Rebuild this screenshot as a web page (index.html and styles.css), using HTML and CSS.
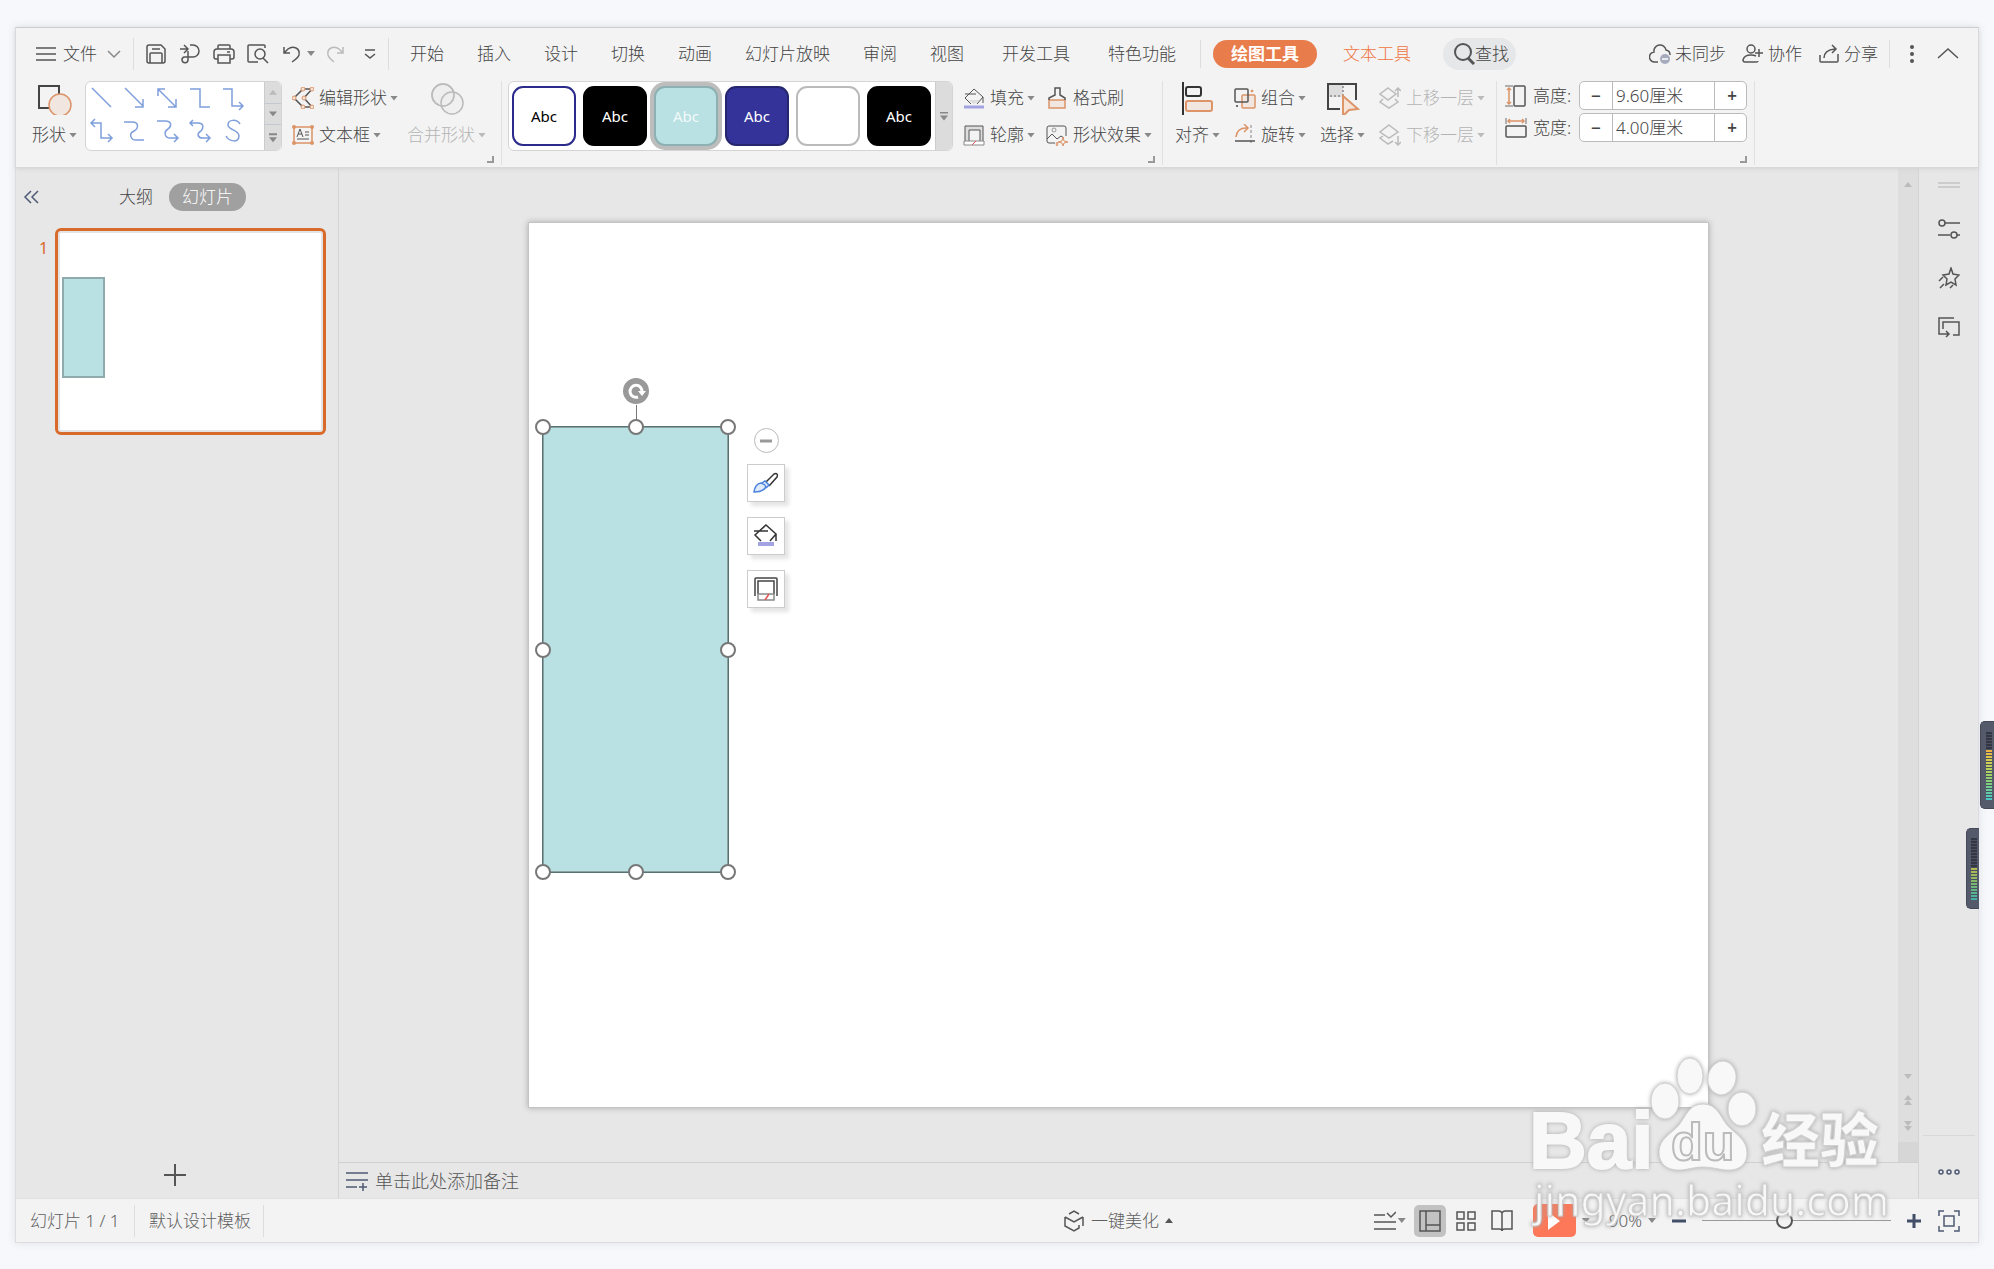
FILE: index.html
```html
<!DOCTYPE html>
<html lang="zh-CN">
<head>
<meta charset="utf-8">
<title>演示文稿</title>
<link rel="stylesheet" href="styles.css">
</head>
<body>
<div class="app">
  <header class="ribbon">
    <div class="menu">
      <button class="file"><svg class="ic" width="20" height="22" viewBox="0 0 20 22"><path d="M0 5h20M0 11h20M0 17h20"/></svg>文件<svg class="ic soft chev" width="14" height="22" viewBox="0 0 14 22"><path d="M1 8l6 6 6-6"/></svg></button>
      <span class="vline"></span>
      <div class="quick">
        <button aria-label="保存"><svg class="ic" viewBox="0 0 22 22"><path d="M4 2h12l4 4v12a2 2 0 0 1-2 2H4a2 2 0 0 1-2-2V4a2 2 0 0 1 2-2zM5 20v-9a1 1 0 0 1 1-1h10a1 1 0 0 1 1 1v9M7 6h8"/></svg></button>
        <button aria-label="输出为PDF"><svg class="ic" viewBox="0 0 22 22"><path d="M1 6h7M5 2l4 4-4 4M11 2h3a6 6 0 0 1 0 12H5a3 3 0 1 0 4 3V8"/></svg></button>
        <button aria-label="打印"><svg class="ic" viewBox="0 0 22 22"><path d="M5 6V3q0-1 1-1h10q1 0 1 1v3M5 16H3q-2 0-2-2V9q0-3 3-3h14q3 0 3 3v5q0 2-2 2h-2M5 12h12v8H5zM14 9h3"/></svg></button>
        <button aria-label="打印预览"><svg class="ic" viewBox="0 0 22 22"><path d="M18 5V3q0-1-1-1H2q-1 0-1 1v15q0 1 1 1h9M16 15l5 5"/><circle cx="13" cy="11" r="5"/></svg></button>
        <button aria-label="撤销"><svg class="ic" viewBox="0 0 22 22"><path d="M3 4v6h6M3 10l4-4q4-3 8-1t3 7q-1 3-7 7"/></svg></button>
        <i class="caret"></i>
        <button aria-label="恢复"><svg class="ic off" viewBox="0 0 22 22"><path d="M18 4v6h-6M18 10l-4-4q-4-3-8-1t-3 7q1 3 6 7"/></svg></button>
        <button aria-label="自定义"><svg class="ic" viewBox="0 0 22 22"><path d="M7 7h10M7 11l5 4 5-4"/></svg></button>
      </div>
      <span class="vline"></span>
      <nav class="tabs">
        <button>开始</button><button>插入</button><button>设计</button><button>切换</button><button>动画</button><button>幻灯片放映</button><button>审阅</button><button>视图</button>
      </nav>
      <nav class="tabs more"><button>开发工具</button><button>特色功能</button></nav>
      <span class="vline short"></span>
      <button class="pill">绘图工具</button>
      <button class="texttab">文本工具</button>
      <button class="find"><svg class="ic" viewBox="0 0 22 22" stroke-width="2"><circle cx="10" cy="9" r="8"/><path d="M15 15l6 6" stroke-width="3"/></svg>查找</button>
      <div class="account">
        <button><svg class="ic" viewBox="0 0 22 22"><path d="M9 19H6a5 5 0 0 1-1-10 6 6 0 0 1 12-2 5 5 0 0 1 4 5"/><circle cx="16" cy="16" r="5" fill="#a5abbd" stroke="none"/><path d="M13 16h6" stroke="#fff"/></svg>未同步</button>
        <button><svg class="ic" viewBox="0 0 22 22"><circle cx="9" cy="6" r="4"/><path d="M14 13q-2-1-5-1-7 0-8 5 0 2 2 2h11q2 0 2-1M17 6v8M13 10h8"/></svg>协作</button>
        <button><svg class="ic" viewBox="0 0 22 22"><path d="M2 12v6q0 1 1 1h16q1 0 1-1v-7M6 15q0-8 11-9M14 2l4 4-4 4"/></svg>分享</button>
      </div>
      <span class="vline short"></span>
      <button class="dots" aria-label="更多"><svg width="4" height="22" viewBox="0 0 4 22" fill="#555"><circle cx="2" cy="4" r="2"/><circle cx="2" cy="11" r="2"/><circle cx="2" cy="18" r="2"/></svg></button>
      <button class="fold" aria-label="收起功能区"><svg class="ic" viewBox="0 0 22 22"><path d="M1 15l10-9 10 9"/></svg></button>
    </div>

    <div class="tools">
      <section class="group g-shape">
        <div class="row">
          <button class="big"><svg class="ic" width="34" height="34" viewBox="0 0 34 34"><path d="M1 5h20v22H1z" stroke="#444" stroke-width="2"/><circle cx="22" cy="24" r="11" fill="#f1e7e0" stroke="#dc9468"/></svg><span>形状<i class="caret"></i></span></button>
          <div class="gallery">
            <svg class="lines" viewBox="0 0 178 68"><g><path d="M6 6l19 19M39 6l18 18M57 17v8h-8M72 7l18 18M72 14V7h7M90 17v8h-8M104 7h10v18h10M137 7h9v17h10M153 20l4 4-4 4"/><path d="M6 41h9v15h10M9 37l-4 4 4 4M22 52l4 4-4 4M38 40h8c8 0 6 7 2 9-6 3-3 9 2 9h8M71 39h8c8 0 6 6 3 8-5 3-3 9 2 9h7M88 52l4 4-4 4M104 41h8c7 0 5 6 3 8-5 3-3 7 2 7h6M107 38l-3 3 3 3M120 52l4 4-4 4M154 42c-3-5-12-5-12 1 0 5 11 5 11 11 0 7-10 6-13 0"/></g></svg>
            <div class="steps"><button aria-label="上一行"><i class="caret up pale"></i></button><button aria-label="下一行"><i class="caret"></i></button><button aria-label="更多形状"><i class="caret bar"></i></button></div>
          </div>
          <div class="pair">
            <button><svg class="ic" viewBox="0 0 22 22"><path d="M11 2h9l-8 9 8 9h-9L2 11z"/><g fill="#f3e3d8" stroke="#dc9468" stroke-width="1"><circle cx="11" cy="2" r="2"/><circle cx="20" cy="2" r="2"/><circle cx="2" cy="11" r="2"/><circle cx="12" cy="11" r="2"/><circle cx="11" cy="20" r="2"/><circle cx="20" cy="20" r="2"/></g></svg>编辑形状<i class="caret"></i></button>
            <button><svg class="ic" viewBox="0 0 22 22"><path d="M2 3h18v16H2z" stroke="#dc9468"/><path d="M5 13l3-8 3 8M6 10h4M13 8h4M13 11h4M5 15h12" stroke-width="1"/><g fill="#dc9468" stroke="none"><circle cx="2" cy="3" r="2"/><circle cx="20" cy="3" r="2"/><circle cx="2" cy="19" r="2"/><circle cx="20" cy="19" r="2"/></g></svg>文本框<i class="caret"></i></button>
          </div>
          <button class="big off" disabled><svg class="ic off" width="34" height="34" viewBox="0 0 34 34"><circle cx="13" cy="14" r="11" fill="#eee"/><circle cx="22" cy="22" r="11" fill="#eee" fill-opacity=".5"/><circle cx="13" cy="14" r="11"/></svg><span>合并形状<i class="caret pale"></i></span></button>
        </div>
        <button class="launch" aria-label="更多选项"></button>
      </section>

      <section class="group g-style">
        <div class="row">
          <div class="gallery">
            <div class="swatches">
              <button class="sw line">Abc</button><button class="sw black">Abc</button><button class="sw teal">Abc</button><button class="sw blue">Abc</button><button class="sw plain">Abc</button><button class="sw black">Abc</button>
            </div>
            <div class="steps one"><button aria-label="更多样式"><i class="caret bar"></i></button></div>
          </div>
          <div class="pair">
            <button><svg class="ic" viewBox="0 0 22 22"><path d="M5 13h12l-6 4z" fill="#ddd" stroke="none"/><path d="M8 17l-6-6 9-9 9 8-6 7M2 7h11M20 10v6" stroke-width="1"/><path d="M1 20h20" stroke="#a3a3e4" stroke-width="3"/></svg>填充<i class="caret"></i></button>
            <button><svg class="ic" viewBox="0 0 22 22" stroke-width="1"><path d="M2 17V2h18v15" fill="#ddd"/><path d="M6 17V6h11v11" fill="#f3f3f3"/><path d="M1 17h20v4H1z" fill="#fff" stroke="#888"/><path d="M9 21l4-4" stroke="#e05555"/></svg>轮廓<i class="caret"></i></button>
          </div>
          <div class="pair">
            <button><svg class="ic" viewBox="0 0 22 22"><path d="M3 13h16v8H3z" fill="#f1e7e0" stroke="#dc9468"/><path d="M3 13v-2l6-3V1h5v7l5 3v2"/></svg>格式刷</button>
            <button><svg class="ic" viewBox="0 0 22 22" stroke-width="1"><path d="M9 19H3q-2 0-2-2V4q0-2 2-2h15q2 0 2 2v8M1 15l5-5 5 5 4-3 3 2"/><circle cx="8" cy="6" r="2" stroke="#999"/><path d="M17 13l1 4 4 1-4 1-1 3-1-3-4-1 4-1zM11 18l1 2-1 2-1-2z" stroke="#dc9468"/></svg>形状效果<i class="caret"></i></button>
          </div>
        </div>
        <button class="launch" aria-label="更多选项"></button>
      </section>

      <section class="group g-arrange">
        <div class="row">
          <button class="big"><svg class="ic" width="34" height="34" viewBox="0 0 34 34" stroke-width="2"><path d="M2 1v33" stroke="#333"/><rect x="5" y="6" width="15" height="9" rx="2" stroke="#333"/><rect x="5" y="20" width="26" height="10" rx="2" fill="#f1e7e0" stroke="#dc9468"/></svg><span>对齐<i class="caret"></i></span></button>
          <div class="pair">
            <button><svg class="ic" viewBox="0 0 22 22"><rect x="8" y="8" width="13" height="13" rx="1" fill="#f1e7e0" stroke="#dc9468"/><rect x="1" y="2" width="13" height="13" rx="1"/><circle cx="18" cy="4" r="1" fill="#dc9468" stroke="#dc9468" stroke-width="1"/><circle cx="3" cy="19" r="1" fill="#444" stroke="none"/></svg>组合<i class="caret"></i></button>
            <button><svg class="ic" viewBox="0 0 22 22"><path d="M17 1v20" stroke-dasharray="3 2" stroke="#aaa"/><path d="M1 17h20"/><path d="M2 13q1-10 12-9M10 0l4 4-4 4" stroke="#dc9468"/></svg>旋转<i class="caret"></i></button>
          </div>
          <button class="big"><svg class="ic" width="34" height="34" viewBox="0 0 34 34"><path d="M2 3h15v13H2z" fill="#ddd" stroke="none"/><path d="M14 28H2V3h28v16" stroke="#444" stroke-width="2"/><path d="M17 5v10M4 15h12" stroke-dasharray="2 2" stroke="#888"/><path d="M17 15l15 13-9 1-6 6z" fill="#f6e4d8" stroke="#dc9468" stroke-width="2"/></svg><span>选择<i class="caret"></i></span></button>
          <div class="pair off">
            <button disabled><svg class="ic off" viewBox="0 0 22 22"><path d="M9 1l8 6-8 6-8-6zM4 12l-3 3 9 6 9-6-3-3M19 10V1M16 4l3-3 3 3"/></svg>上移一层<i class="caret pale"></i></button>
            <button disabled><svg class="ic off" viewBox="0 0 22 22"><path d="M10 1l9 7-9 6-9-6zM4 12l-3 2 8 6 5-3M19 12v9M16 18l3 3 3-3"/></svg>下移一层<i class="caret pale"></i></button>
          </div>
        </div>
      </section>

      <section class="group g-size">
        <div class="sizes">
          <div class="size"><svg class="ic" viewBox="0 0 22 22"><path d="M0 1h8M0 21h8" stroke="#999"/><path d="M4 3v16M2 5l2-2 2 2M2 17l2 2 2-2" stroke="#dc9468"/><rect x="9" y="1" width="11" height="20" rx="1"/></svg><label for="h">高度:</label><div class="spin"><button aria-label="减小高度">−</button><input id="h" value="9.60厘米"><button aria-label="增大高度">+</button></div></div>
          <div class="size"><svg class="ic" viewBox="0 0 22 22"><path d="M1 1v6M21 1v6" stroke="#999"/><path d="M3 4h16M5 2L3 4l2 2M17 2l2 2-2 2" stroke="#dc9468"/><rect x="1" y="9" width="20" height="11" rx="1"/></svg><label for="w">宽度:</label><div class="spin"><button aria-label="减小宽度">−</button><input id="w" value="4.00厘米"><button aria-label="增大宽度">+</button></div></div>
        </div>
        <button class="launch" aria-label="更多选项"></button>
      </section>
    </div>
  </header>

  <main class="work">
    <aside class="outline">
      <div class="outhead">
        <button class="collapse" aria-label="收起"><svg class="ic navy" width="16" height="22" viewBox="0 0 16 22"><path d="M8 5l-6 6 6 6M15 5l-6 6 6 6"/></svg></button>
        <button class="tab">大纲</button>
        <button class="tab on">幻灯片</button>
      </div>
      <div class="thumbrow"><span class="num">1</span><button class="thumb" aria-label="幻灯片 1"><span class="mini"></span></button></div>
      <button class="add" aria-label="新建幻灯片"><svg width="22" height="22" viewBox="0 0 22 22" stroke="#555" stroke-width="2"><path d="M0 11h22M11 0v22"/></svg></button>
    </aside>

    <section class="center">
      <div class="stagerow">
        <div class="stage">
          <div class="slide">
            <div class="shape">
              <i class="stem"></i>
              <svg class="rotate" viewBox="0 0 26 26"><circle cx="13" cy="13" r="13" fill="#999"/><path d="M15 19a6 6 0 1 1 4-5" fill="none" stroke="#fff" stroke-width="3"/><path d="M15 13h8l-4 5z" fill="#fff"/></svg>
              <i class="h" style="left:0;top:0"></i><i class="h" style="left:50%;top:0"></i><i class="h" style="left:100%;top:0"></i>
              <i class="h" style="left:0;top:50%"></i><i class="h" style="left:100%;top:50%"></i>
              <i class="h" style="left:0;top:100%"></i><i class="h" style="left:50%;top:100%"></i><i class="h" style="left:100%;top:100%"></i>
              <div class="float">
                <button class="round" aria-label="收起工具"><svg width="12" height="4" viewBox="0 0 12 4"><path d="M0 2h12" stroke="#999" stroke-width="3"/></svg></button>
                <button class="sq" aria-label="样式"><svg width="26" height="26" viewBox="0 0 26 26" fill="none" stroke="#333" stroke-width="1.5"><path d="M13 12l8-8q2-1 3 0t0 3l-8 9"/><path d="M1 22q1-8 7-9 4 1 5 4-3 5-12 5zM9 13l3-2 4 4-3 3" stroke="#4a83dc" fill="#dfeafc"/></svg></button>
                <button class="sq" aria-label="填充"><svg width="26" height="26" viewBox="0 0 26 26" fill="none" stroke="#333" stroke-width="1.5"><path d="M8 18l-6-6L13 2l10 9-6 7M1 8h14M23 11v7"/><path d="M5 21h16" stroke="#a3a3e4" stroke-width="4"/></svg></button>
                <button class="sq" aria-label="轮廓"><svg width="26" height="26" viewBox="0 0 26 26" fill="none" stroke="#444" stroke-width="1.5"><path d="M2 20V3q0-1 1-1h20q1 0 1 1v17M5 18V5h16v13"/><path d="M5 18h16v6H5z" stroke="#888"/><path d="M12 24l4-6" stroke="#e05555"/></svg></button>
              </div>
            </div>
          </div>
        </div>
        <div class="scroll">
          <i class="caret up pale"></i><span class="fill"></span><i class="caret pale"></i><span class="dbl"><i class="caret up pale"></i><i class="caret up pale"></i></span><span class="dbl"><i class="caret pale"></i><i class="caret pale"></i></span><span class="nub"></span>
        </div>
      </div>
      <div class="notes"><svg class="ic navy" viewBox="0 0 22 22"><path d="M0 3h22M0 10h22M0 17h11M13 17h8M17 13v8"/></svg><input aria-label="备注" placeholder="单击此处添加备注"></div>
    </section>

    <aside class="side">
      <svg class="ic grip" viewBox="0 0 22 22" stroke-width="2"><path d="M0 9h22M0 13h22" stroke="#ccc"/></svg>
      <button aria-label="属性"><svg class="ic" viewBox="0 0 22 22"><circle cx="4" cy="5" r="3"/><path d="M7 5h15M0 17h12M19 17h3"/><circle cx="16" cy="17" r="3"/></svg></button>
      <button aria-label="动画"><svg class="ic" viewBox="0 0 22 22"><path d="M13 1l2 6 6 1-4 4 1 6-5-3-5 3 1-6-4-4 6-1zM1 14l4-4M2 21l4-4M12 21l3-3"/></svg></button>
      <button aria-label="切换"><svg class="ic" viewBox="0 0 22 22"><path d="M16 2H1v16h10M8 15l3 3-3 3M5 13V6h16v13h-6"/></svg></button>
      <span class="fill"></span>
      <span class="hline"></span>
      <button aria-label="更多"><svg class="ic navy" viewBox="0 0 22 22"><circle cx="3" cy="11" r="2"/><circle cx="11" cy="11" r="2"/><circle cx="19" cy="11" r="2"/></svg></button>
    </aside>
  </main>

  <footer class="status">
    <span class="page">幻灯片 1 / 1</span><span class="vline"></span><span class="tpl">默认设计模板</span><span class="vline"></span>
    <button class="beauty"><svg class="ic" viewBox="0 0 22 22"><path d="M6 4l5-3 5 3M2 7l9 5 9-5M2 7v9l9 5 5-3v-3M20 7v9"/></svg>一键美化<i class="caret up dark"></i></button>
    <div class="views">
      <button aria-label="备注"><svg class="ic" viewBox="0 0 22 22"><path d="M0 5h11M13 3l4 4 5-5M0 12h22M0 19h22"/></svg><i class="caret"></i></button>
      <button class="box on" aria-label="普通视图"><svg class="ic" viewBox="0 0 22 22"><path d="M1 1h20v20H1zM7 1v20M7 15h14"/></svg></button>
      <button class="box" aria-label="浏览视图"><svg class="ic" viewBox="0 0 22 22"><path d="M2 2h7v7H2zM13 2h7v7h-7zM2 13h7v7H2zM13 13h7v7h-7z"/></svg></button>
      <button class="box" aria-label="阅读视图"><svg class="ic" viewBox="0 0 22 22"><path d="M11 3q-1-2-3-2H1v18h7q3 0 3 2 0-2 3-2h7V1h-7q-2 0-3 2zV19"/></svg></button>
      <button class="play" aria-label="播放"><svg width="14" height="20" viewBox="0 0 14 20"><path d="M1 1l12 9-12 9z" fill="#fff"/></svg></button>
      <i class="caret"></i>
    </div>
    <button class="pct">90%<i class="caret"></i></button>
    <button class="zm" aria-label="缩小"><svg width="14" height="14" viewBox="0 0 14 14"><path d="M0 7h14" stroke="#424d68" stroke-width="3"/></svg></button>
    <input class="range" type="range" min="0" max="100" value="43" aria-label="缩放">
    <button class="zm" aria-label="放大"><svg width="14" height="14" viewBox="0 0 14 14"><path d="M0 7h14M7 0v14" stroke="#424d68" stroke-width="3"/></svg></button>
    <button class="fit" aria-label="适应窗口"><svg class="ic navy" viewBox="0 0 22 22"><path d="M6 6h10v10H6zM1 6V1h5M16 1h5v5M21 16v5h-5M6 21H1v-5"/></svg></button>
  </footer>

  <svg class="mark" viewBox="0 0 370 190">
    <g class="glyph">
      <text class="en" x="9" y="117">Bai</text>
      <ellipse cx="145" cy="50" rx="14" ry="18"/><ellipse cx="170" cy="25" rx="13" ry="18"/><ellipse cx="202" cy="27" rx="14" ry="17" transform="rotate(10 202 27)"/><ellipse cx="222" cy="58" rx="14" ry="17"/>
      <path d="M183 53c14 0 17 12 24 21 8 9 20 14 20 28s-11 18-22 17c-8-1-14-3-22-3s-13 2-21 3c-12 1-23-4-23-18 0-13 12-18 20-27 7-9 10-21 24-21z"/>
      <text class="du" x="151" y="109">du</text>
      <text class="cn" x="241" y="111">经验</text>
      <text class="url" x="14" y="165">jingyan.baidu.com</text>
    </g>
  </svg>
</div>
<div class="meter inner"><i class="bars low"></i></div>
<div class="meter outer"><i class="bars"></i></div>
</body>
</html>
```

FILE: styles.css
```css
* { box-sizing: border-box; }
body {
  margin: 0;
  height: 100vh;
  min-width: 1900px;
  padding: 27px 15px 26px;
  background: #f6f8fb;
  color: #444;
  font: 300 17px/24px "Noto Sans", "Noto Sans CJK SC", sans-serif;
  position: relative;
  overflow: hidden;
}
button, input { font: inherit; color: inherit; border: 0; background: none; padding: 0; margin: 0; }
button { display: flex; align-items: center; white-space: nowrap; }
svg { flex: none; display: block; }
.ic { width: 22px; height: 22px; fill: none; stroke: #555; }
.ic:not([stroke-width]) { stroke-width: 1.5; }
.ic[width="20"] { width: 20px; }
.ic[width="14"] { width: 14px; }
.ic[width="16"] { width: 16px; }
.ic[width="34"] { width: 34px; height: 34px; }
.ic.soft { stroke: #888; }
.ic.off { stroke: #bbb; }
.ic.navy { stroke: #4f5a74; }
.off { color: #b4b4b4; }
.caret { width: 8px; height: 5px; background: #888; clip-path: polygon(0 0, 100% 0, 50% 100%); flex: none; }
.caret.up { clip-path: polygon(50% 0, 100% 100%, 0 100%); }
.caret.pale { background: #bbb; }
.caret.dark { background: #555; }
.caret.bar { height: 9px; clip-path: polygon(0 0, 100% 0, 100% 2px, 0 2px, 0 4px, 100% 4px, 50% 100%, 0 4px); }
.vline { width: 1px; height: 32px; background: #ddd; flex: none; }
.vline.short { height: 28px; }
.fill { flex: 1; }

.app {
  position: relative;
  height: 100%;
  display: flex;
  flex-direction: column;
  background: #e7e7e7;
  border: 1px solid #dcdde0;
  border-top-color: #c9cbcf;
  box-shadow: 0 0 8px #dfe1e6;
}

/* ribbon */
.ribbon { background: #f3f3f3; border-bottom: 1px solid #d8d8d8; box-shadow: 0 1px 4px #d4d4d4; z-index: 1; }
.menu { display: flex; align-items: center; height: 53px; padding: 0 19px 2px 20px; }
.file { gap: 7px; }
.chev { margin: 0 12px 0 3px; }
.quick { display: flex; align-items: center; gap: 12px; margin: 0 8px 0 11px; }
.quick .caret { margin: 0 -2px 0 -8px; }
.quick button:last-child { margin-left: -1px; }
.tabs { display: flex; gap: 33px; margin-left: 21px; }
.tabs.more { gap: 38px; margin: 0 24px 0 38px; }
.pill { height: 28px; padding: 0 18px; margin-left: 12px; border-radius: 14px; background: #e87c4b; color: #fff; font-weight: 700; }
.texttab { color: #f0743f; margin: 0 32px 0 26px; }
.find { height: 32px; padding: 0 7px 0 10px; border-radius: 16px; background: #e6e7e9; }
.account { display: flex; gap: 16px; margin-left: auto; margin-right: 11px; }
.account button { gap: 4px; }
.dots { margin: 0 23px 0 20px; }

.tools { display: flex; height: 86px; padding-left: 1px; }
.group { display: flex; flex-direction: column; border-right: 1px solid #e0e0e0; height: 84px; }
.row { display: flex; height: 71px; }
.launch { width: 7px; height: 7px; margin: 4px 7px 0 0; align-self: flex-end; border: solid #999; border-width: 0 2px 2px 0; }
.big { display: grid; grid-template-rows: 34px 34px; row-gap: 3px; justify-items: center; }
.big span, .pair button { display: flex; align-items: center; height: 34px; }
.big .caret { margin-left: 3px; }
.pair { display: grid; grid-template-rows: 34px 34px; row-gap: 3px; align-content: start; }
.pair button { gap: 3px; }
.pair .ic { margin-right: 2px; }
.gallery { display: flex; height: 70px; background: #fff; border: 1px solid #d4d4d4; border-radius: 6px; }
.lines { width: 178px; height: 68px; fill: none; stroke: #7f9fdc; stroke-width: 1.5; }
.steps { width: 17px; display: grid; background: #dcdcdc; border-left: 1px solid #ccc; border-radius: 0 5px 5px 0; }
.steps button { justify-content: center; }
.steps button + button { border-top: 1px solid #c4c8d0; }

.g-shape { padding-left: 15px; }
.g-shape .gallery { margin: 0 10px 0 8px; }
.g-shape .pair { margin-right: 9px; }
.g-shape .row { padding-right: 15px; }
.g-style { padding-left: 6px; }
.g-style .gallery { margin-right: 10px; }
.g-style .pair + .pair { margin: 0 10px 0 11px; }
.swatches { display: flex; gap: 7px; align-items: center; padding: 0 4px 0 3px; }
.sw { width: 64px; height: 60px; border: 2px solid #000; border-radius: 11px; justify-content: center; font-size: 15px; font-weight: 400; }
.sw.line { color: #000; border-color: #2b2b8c; }
.sw.black { color: #fff; background: #000; }
.sw.teal { color: #f2fafa; background: #b9e0e2; border-color: #8db0b2; box-shadow: 0 0 0 4px #bdbdbd; }
.sw.blue { color: #fff; background: #333399; border-color: #26266f; }
.sw.plain { color: #fff; background: #fff; border-color: #bbb; }
.g-arrange { padding-left: 12px; }
.g-arrange .row { gap: 14px; padding-right: 11px; }
.g-size { padding: 0 0 0 8px; }
.sizes { display: grid; gap: 3px; height: 71px; align-content: start; padding-right: 7px; }
.size { display: flex; align-items: center; }
.size label { width: 46px; margin-left: 6px; }
.spin { display: grid; grid-template-columns: 32px 104px 32px; width: 168px; height: 29px; background: #fff; border: 1px solid #bbb; border-radius: 5px; }
.spin button { justify-content: center; line-height: 24px; font-weight: 600; }
.spin input { width: 103px; border: solid #bbb; border-width: 0 1px; padding: 0 3px; }

/* work area */
.work { flex: 1; display: flex; min-height: 0; }
.outline { width: 323px; border-right: 1px solid #d4d4d4; display: flex; flex-direction: column; }
.outhead { display: flex; align-items: center; height: 58px; padding-left: 7px; }
.collapse { margin-right: 80px; }
.tab.on { height: 28px; margin-left: 16px; padding: 0 13px; border-radius: 14px; background: #a0a0a0; color: #fff; }
.thumbrow { display: flex; margin-top: 2px; padding-left: 23px; }
.num { width: 16px; color: #d8692b; font-size: 16px; font-weight: 400; padding-top: 8px; }
.thumb { width: 271px; height: 207px; border: 3px solid #d86b2b; border-radius: 6px; background: #fff; box-shadow: inset 0 0 0 2px #e4e4e4; align-items: flex-start; padding: 46px 4px 0; }
.mini { width: 43px; height: 101px; background: #b9e0e2; border: 2px solid #8fabad; }
.add { margin: auto auto 12px 148px; }

.center { flex: 1; display: flex; flex-direction: column; min-width: 0; }
.stagerow { flex: 1; display: flex; min-height: 0; }
.stage { flex: 1; display: flex; align-items: center; justify-content: center; }
.slide { position: relative; height: calc(100% - 110px); aspect-ratio: 4 / 3; background: #fff; box-shadow: 0 0 0 1px #c4c4c4, 0 0 6px 1px #aaa; }
.shape { position: absolute; left: 13px; top: 203px; width: 187px; height: 447px; background: #b9e0e2; border: 1px solid #557274; outline: 1px solid #8aa0a1; outline-offset: -2px; }
.h { position: absolute; width: 16px; height: 16px; margin: -8px; border: 2px solid #777; border-radius: 50%; background: #fff; }
.stem { position: absolute; left: 50%; top: -22px; width: 1px; height: 20px; background: #777; }
.rotate { position: absolute; left: 50%; top: -49px; width: 26px; height: 26px; margin-left: -13px; }
.float { position: absolute; left: 204px; top: 1px; display: flex; flex-direction: column; align-items: center; gap: 15px; }
.round { width: 25px; height: 25px; border: 1px solid #bbb; border-radius: 50%; background: #fff; justify-content: center; margin-bottom: -4px; }
.sq { width: 38px; height: 38px; border: 1px solid #ccc; background: #fff; justify-content: center; box-shadow: 4px 4px 4px #e4e4e4; }
.scroll { width: 20px; background: #dedede; display: flex; flex-direction: column; align-items: center; padding-top: 14px; }
.dbl { display: grid; margin-top: 16px; }
.nub { width: 20px; height: 20px; margin-top: 11px; background: #d6d6d6; }
.notes { height: 36px; display: flex; align-items: center; gap: 7px; padding-left: 7px; border-top: 1px solid #d0d0d0; font-size: 18px; }
.notes input { flex: 1; }
.notes input::placeholder { color: #555; opacity: 1; }
.side { width: 60px; border-left: 1px solid #d4d4d4; display: flex; flex-direction: column; align-items: center; }
.side .grip { margin: 6px 0 -5px; }
.side button { height: 22px; margin-top: 27px; }
.side .hline { width: 52px; height: 1px; background: #d8d8d8; }
.side button:last-child { margin: 25px 0 15px; }

/* status bar */
.status { height: 44px; display: flex; align-items: center; background: #f3f3f3; border-top: 1px solid #e0e0e0; color: #606060; padding-right: 18px; }
.page { width: 118px; padding-left: 14px; }
.tpl { width: 128px; padding-left: 14px; }
.beauty { gap: 6px; margin-left: 799px; }
.views { display: flex; align-items: center; margin-left: auto; gap: 4px; }
.views button:first-child { margin-right: 4px; gap: 2px; }
.box { width: 32px; height: 32px; border-radius: 5px; justify-content: center; }
.box.on { background: #c2c2c2; }
.play { width: 43px; height: 33px; margin: 0 2px 0 11px; border-radius: 5px; background: #fc7858; justify-content: center; }
.pct { gap: 6px; margin: 0 16px 0 19px; }
.range { appearance: none; width: 189px; height: 20px; margin: 0 16px; background: linear-gradient(#999, #999) center / 100% 1px no-repeat; }
.range::-webkit-slider-thumb { appearance: none; width: 17px; height: 17px; border: 2px solid #555; border-radius: 50%; background: #f3f3f3; }
.fit { margin-left: 17px; }

/* watermark and edge meters lie over the page */
.mark { position: absolute; right: 88px; bottom: 1px; width: 370px; height: 190px; pointer-events: none; z-index: 2; filter: drop-shadow(0 0 2px #aaa); }
.glyph { fill: #f8f8f8; stroke: #d0d0d0; stroke-width: 1; }
.mark .en { font: 700 80px "Liberation Sans", sans-serif; stroke: #f8f8f8; stroke-width: 2; }
.mark .du { font: 700 52px "Liberation Sans", sans-serif; stroke: #bbb; stroke-width: 2; }
.mark .cn { font: 900 59px "Noto Sans CJK SC", sans-serif; }
.mark .url { font: 400 41px "Noto Sans", sans-serif; }
.meter { position: absolute; background: #555a6b; border: 1px solid #444857; border-right: 0; border-radius: 5px 0 0 5px; z-index: 3; }
.meter.outer { right: 0; top: 721px; width: 14px; height: 88px; padding: 10px 2px 0 5px; }
.meter.inner { right: 15px; top: 828px; width: 13px; height: 81px; padding: 9px 2px 0 4px; }
.bars { display: block; height: 68px; background: repeating-linear-gradient(transparent 0 2px, #4c5060 2px 3px), linear-gradient(#333743 0 18px, #f0b040 18px, #d0d050 30px, #8cd070 48px, #48c8c8); }
.bars.low { height: 62px; background: repeating-linear-gradient(transparent 0 2px, #4c5060 2px 3px), linear-gradient(#333743 0 30px, #b8b850 30px, #80b868 44px, #40b0a8); }
```
